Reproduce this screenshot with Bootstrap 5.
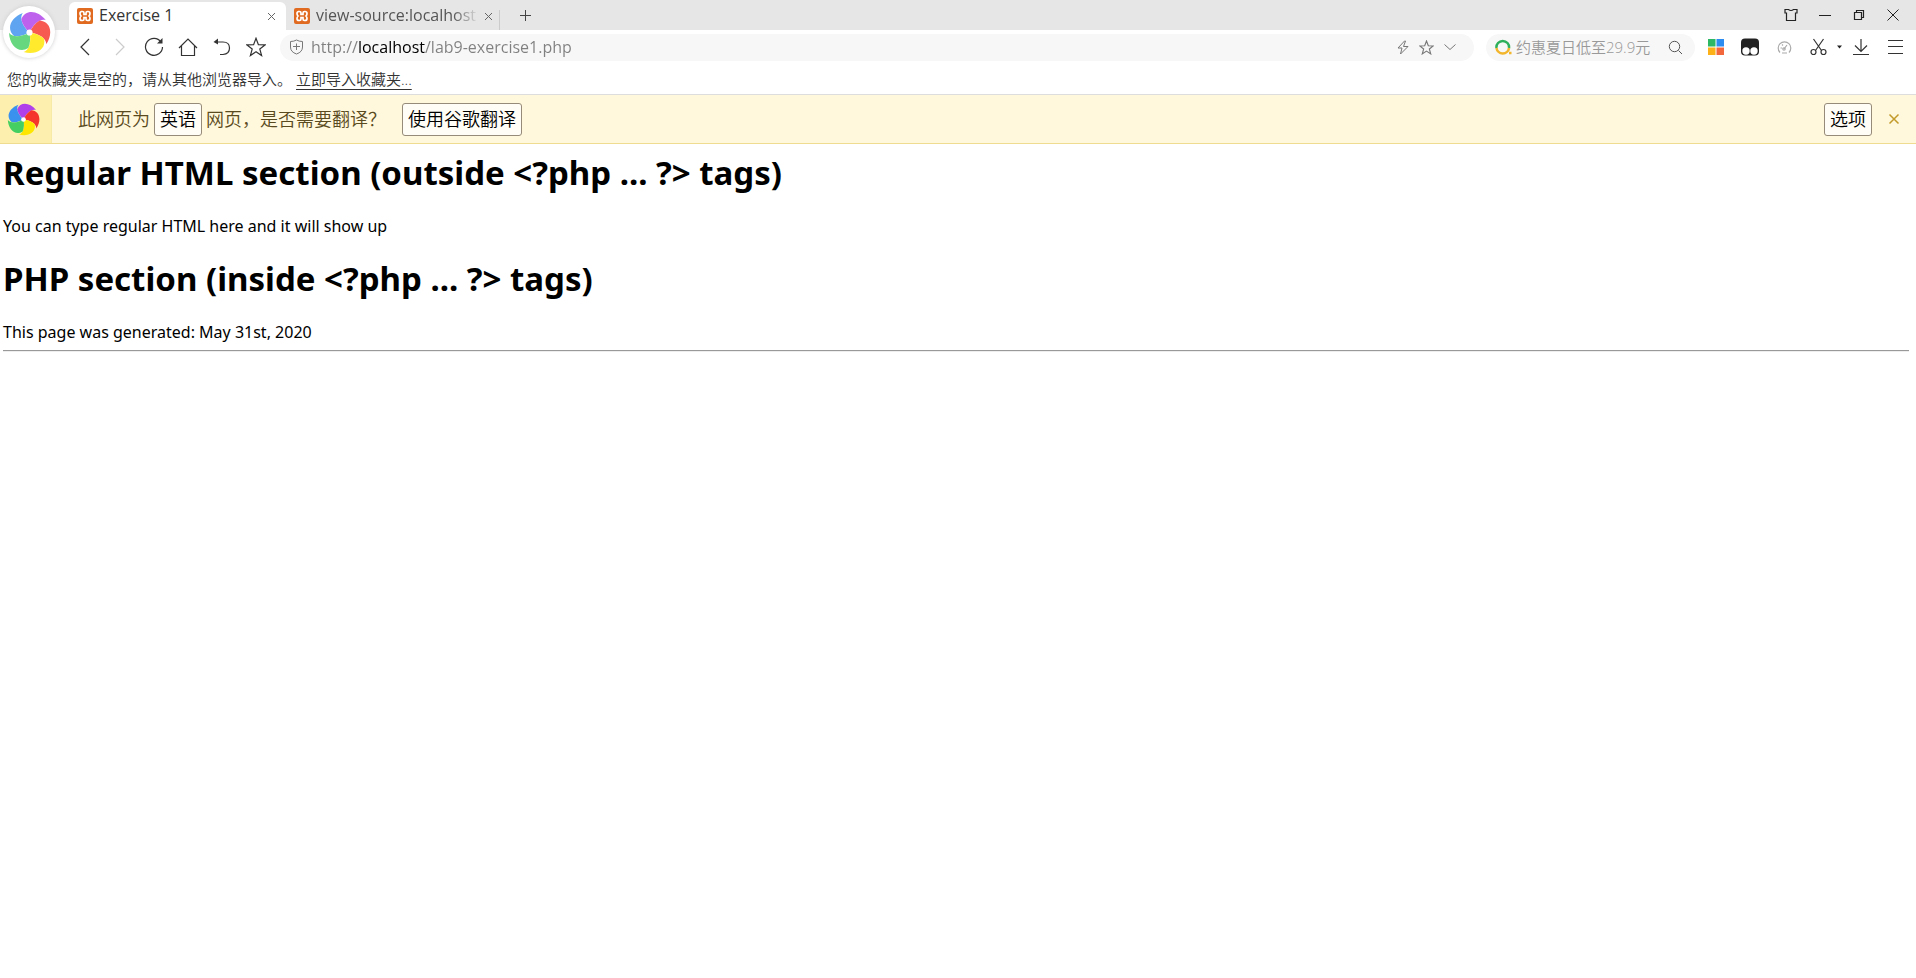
<!DOCTYPE html>
<html lang="zh-CN">
<head>
<meta charset="utf-8">
<meta name="viewport" content="width=device-width, initial-scale=1">
<title>Exercise 1</title>
<link href="https://cdn.jsdelivr.net/npm/bootstrap@5.3.0/dist/css/bootstrap.min.css" rel="stylesheet">
<style>
  body { font-family: "Open Sans", "Noto Sans CJK SC", sans-serif; color: #000; fill: none; stroke: currentColor; }
  button { border: 0; background: transparent; padding: 0; color: inherit; }
  svg { display: block; flex: none; }
  .tab-strip { height: 30px; background: #e6e6e6; padding-left: 69px; padding-right: 6px; }
  .browser-tab { height: 28px; width: 213px; padding: 0 5px 0 8px; font-size: 16px; color: #555; }
  .browser-tab.current { width: 217px; padding-right: 9px; background: #fff; border-radius: 6px 6px 0 0; color: #333; }
  .browser-tab .title { line-height: 26px; margin-left: 6px; padding-bottom: 2px; overflow: hidden; white-space: nowrap; text-align: left; }
  .browser-tab .fade-end { -webkit-mask-image: linear-gradient(90deg, #000 84%, transparent 100%); mask-image: linear-gradient(90deg, #000 84%, transparent 100%); }
  .tab-rule { width: 1px; height: 20px; background: #ccc; }
  .win-btn { width: 34px; height: 30px; color: #222; }
  .brand-disc { left: 3px; top: 6px; width: 52px; height: 52px; background: #fff; box-shadow: 0 0 4px #ccc; }
  .tool-row { height: 34px; padding-left: 69px; padding-right: 4px; }
  .tool { width: 34px; height: 34px; color: #333; }
  .pill { height: 27px; border-radius: 14px; background: #f7f7f7; }
  .pill input { border: 0; outline: 0; background-color: transparent; padding: 0; min-width: 0; }
  .address { margin-left: 7px; margin-right: 12px; padding-left: 9px; padding-right: 17px; color: #777; gap: 9px; }
  .address input { font-size: 16px; margin-left: -2px;
    color: transparent; background-image: linear-gradient(90deg, #808080 47px, #000 47px, #000 114px, #808080 114px);
    -webkit-background-clip: text; background-clip: text; }
  .search { width: 209px; padding: 0 12px 0 9px; margin-right: 4px; }
  .search input { font-size: 15px; font-weight: 350; margin-left: 4px; }
  .search input::placeholder { color: #999; opacity: 1; }
  .fav-row { height: 30px; font-size: 15px; font-weight: 350; line-height: 30px; padding: 0 7px; color: #333; }
  .fav-row a { color: #333; margin-left: 4px; text-underline-offset: 4px; }
  .translate-bar { height: 50px; background: #fff8dc; border-top: 1px solid #ddd; border-bottom: 1px solid #f0dc90; font-size: 18px; font-weight: 350; color: #5a4a20; }
  .translate-mark { width: 52px; margin-right: 26px; background: #fdf0ae; border-right: 1px solid #f7e9a6; padding-left: 7px; }
  .translate-bar .choice { height: 33px; padding: 0 5px; border: 1px solid #968a78; border-radius: 3px; background: #fffdf5; color: #000; line-height: 30px; font-weight: 350; }
  .page { padding: 10px 7px 0 3px; font-family: "Noto Sans", "Open Sans", sans-serif; }
  .page h1 { font-size: 33px; font-weight: 700; line-height: 38px; margin: 0 0 23px; }
  .page p { font-size: 16px; line-height: 22px; margin: 0 0 23px; }
  .page p.stamp { margin-bottom: 7px; }
  .page hr { margin: 0; height: 2px; border: 0; border-top: 1px solid #999; border-bottom: 1px solid #eee; opacity: 1; }
</style>
</head>
<body class="bg-white">

<svg width="0" height="0" class="position-absolute" aria-hidden="true">
  <defs>
    <path id="petal" d="M0 0C-4-4-7-8-8-13C-4-23 8-22 16-12C11-14 4-9 0 0Z"/>
    <symbol id="wheel" viewBox="-21 -21 42 42">
      <g stroke="none">
        <use href="#petal" fill="#3b91ee" transform="rotate(288)"/>
        <use href="#petal" fill="#b040ea"/>
        <use href="#petal" fill="#f5362a" transform="rotate(72)"/>
        <use href="#petal" fill="#ffe600" transform="rotate(144)"/>
        <use href="#petal" fill="#45cf62" transform="rotate(216)"/>
        <circle r="3" fill="#fff"/>
      </g>
    </symbol>
    <symbol id="xampp" viewBox="0 0 16 16">
      <rect width="16" height="16" rx="2" fill="#e06a20" stroke="none"/>
      <path d="M4 3.500H5.500Q7 3.500 7 5V6.500H9V5Q9 3.500 10.500 3.500H11Q13 3.500 13 5.500Q13 7 12 8Q13 9 13 10.500Q13 12.500 11 12.500H10.500Q9 12.500 9 11V9.500H7V11Q7 12.500 5.500 12.500H5Q3 12.500 3 10.500Q3 9 4 8Q3 7 3 5.500Q3 3.500 5 3.500" fill="none" stroke="#fff" stroke-width="1.700"/>
    </symbol>
  </defs>
</svg>

<header class="position-relative">
  <div class="tab-strip d-flex align-items-end">
    <div class="browser-tab current d-flex align-items-center">
      <svg width="16" height="16"><use href="#xampp"/></svg>
      <button class="title flex-grow-1">Exercise 1</button>
      <button aria-label="Close tab"><svg width="11" height="11" viewBox="0 0 11 11" stroke="#666"><path d="M2 2L9 9M9 2L2 9"/></svg></button>
    </div>
    <div class="browser-tab d-flex align-items-center">
      <svg width="16" height="16"><use href="#xampp"/></svg>
      <button class="title fade-end flex-grow-1">view-source:localhost</button>
      <button class="ms-1" aria-label="Close tab"><svg width="11" height="11" viewBox="0 0 11 11" stroke="#666"><path d="M2 2L9 9M9 2L2 9"/></svg></button>
    </div>
    <div class="tab-rule"></div>
    <button class="win-btn d-flex align-items-center justify-content-center ms-2" aria-label="New tab"><svg width="13" height="13" viewBox="0 0 13 13" stroke="#444"><path d="M6.500 1V12M1 6.500H12"/></svg></button>
    <div class="d-flex ms-auto">
      <button class="win-btn d-flex align-items-center justify-content-center" aria-label="Skins"><svg width="14" height="14" viewBox="0 0 14 14" stroke-width="1.200"><path d="M1 1.500H4.500Q7 3.500 9.500 1.500H13V5H11.500V12.500H2.500V5H1Z"/></svg></button>
      <button class="win-btn d-flex align-items-center justify-content-center" aria-label="Minimize"><svg width="12" height="12" viewBox="0 0 12 12"><path d="M0 6.500H12"/></svg></button>
      <button class="win-btn d-flex align-items-center justify-content-center" aria-label="Restore"><svg width="12" height="12" viewBox="0 0 12 12" stroke-width="1.200"><path d="M1.500 3.500H8.500V10.500H1.500ZM3.500 3V1.500H10.500V8.500H9"/></svg></button>
      <button class="win-btn d-flex align-items-center justify-content-center" aria-label="Close"><svg width="12" height="12" viewBox="0 0 12 12"><path d="M.5 .5L11.500 11.500M11.500 .5L.5 11.500"/></svg></button>
    </div>
  </div>

  <button class="brand-disc position-absolute rounded-circle d-flex align-items-center justify-content-center" aria-label="Account"><svg width="43" height="43" opacity=".82"><use href="#wheel"/></svg></button>

  <div class="tool-row d-flex align-items-center">
    <button class="tool d-flex align-items-center justify-content-center" aria-label="Back"><svg width="20" height="20" viewBox="0 0 20 20" stroke-width="1.200"><path d="M13 2L5 10L13 18"/></svg></button>
    <button class="tool d-flex align-items-center justify-content-center" aria-label="Forward"><svg width="20" height="20" viewBox="0 0 20 20" stroke="#ccc" stroke-width="1.200"><path d="M6 2L14 10L6 18"/></svg></button>
    <button class="tool d-flex align-items-center justify-content-center" aria-label="Reload"><svg width="20" height="20" viewBox="0 0 20 20" stroke-width="1.200"><path d="M17 5A8.500 8.500 0 1 0 18.500 10"/><path d="M18.500 1V6.500H13Z" fill="currentColor" stroke="none"/></svg></button>
    <button class="tool d-flex align-items-center justify-content-center" aria-label="Home"><svg width="20" height="20" viewBox="0 0 20 20" stroke-width="1.200"><path d="M1 11L10 2L19 11M3.500 9V18.500H16.500V9"/></svg></button>
    <button class="tool d-flex align-items-center justify-content-center" aria-label="Undo"><svg width="20" height="20" viewBox="0 0 20 20" stroke-width="1.200"><path d="M3 5H11Q17.500 5 17.500 11T11 17.500H8"/><path d="M1.500 5L6 1.500V7.500Z" fill="currentColor" stroke="none"/></svg></button>
    <button class="tool d-flex align-items-center justify-content-center" aria-label="Bookmark"><svg width="20" height="20" viewBox="0 0 20 20" stroke-width="1.200"><path d="M10 1.300L12.400 7.600L19 7.900L13.800 12L15.600 18.500L10 14.800L4.400 18.500L6.200 12L1 7.900L7.600 7.600Z"/></svg></button>

    <div class="pill address d-flex align-items-center flex-grow-1">
      <svg width="15" height="16" viewBox="0 0 15 16"><path d="M7.500 1Q10 2.500 13.500 2.500V8Q13.500 13 7.500 15Q1.500 13 1.500 8V2.500Q5 2.500 7.500 1ZM7.500 4.500V11M4 7.500H11"/></svg>
      <input class="flex-grow-1" type="text" aria-label="Address" value="http://localhost/lab9-exercise1.php">
      <button aria-label="Fast mode"><svg width="14" height="15" viewBox="0 0 14 15"><path d="M8.500 1L2 8H6L4.500 14L12 6.500H7.500L9.500 1Z"/></svg></button>
      <button aria-label="Add favourite"><svg width="15" height="15" viewBox="0 0 20 20" stroke-width="1.500"><path d="M10 1.300L12.400 7.600L19 7.900L13.800 12L15.600 18.500L10 14.800L4.400 18.500L6.200 12L1 7.900L7.600 7.600Z"/></svg></button>
      <button aria-label="History"><svg width="14" height="14" viewBox="0 0 14 14"><path d="M1.500 4.500L7 9.500L12.500 4.500"/></svg></button>
    </div>

    <div class="pill search d-flex align-items-center">
      <svg width="17" height="16" viewBox="0 0 17 16" stroke-width="2.500"><path d="M1.500 9A6.300 6.300 0 1 1 14 9" stroke="#2eaf5b"/><path d="M1.500 9A6.300 6.300 0 0 0 14 9" stroke="#f2b52b"/><path d="M14 14H16.500" stroke="#f2b52b"/></svg>
      <input class="flex-grow-1" type="text" aria-label="Search" placeholder="约惠夏日低至29.9元">
      <button aria-label="Search"><svg width="15" height="15" viewBox="0 0 15 15" stroke="#555"><circle cx="6.500" cy="6.500" r="5.200"/><path d="M10.500 10.500L14 14"/></svg></button>
    </div>

    <button class="tool d-flex align-items-center justify-content-center" aria-label="Apps"><svg width="16" height="16" viewBox="0 0 16 16" stroke="none"><path d="M0 0H7.500V7.500H0Z" fill="#2cb865"/><path d="M8.500 0H16V7.500H8.500Z" fill="#2d8cf0"/><path d="M0 8.500H7.500V16H0Z" fill="#fbb117"/><path d="M8.500 8.500H16V16H8.500Z" fill="#f2673c"/></svg></button>
    <button class="tool d-flex align-items-center justify-content-center" aria-label="Tampermonkey"><svg width="18" height="18" viewBox="0 0 18 18" stroke="none"><rect y="0.500" width="18" height="17" rx="4" fill="#222"/><circle cx="5" cy="13" r="3.700" fill="#fff"/><circle cx="13" cy="13" r="3.700" fill="#fff"/></svg></button>
    <button class="tool d-flex align-items-center justify-content-center" aria-label="Speed"><svg width="15" height="15" viewBox="0 0 15 15" stroke="#aaa" stroke-width="1.200"><path d="M3 12.500A6.300 6.300 0 1 1 12 12.500M7 9L10 5M5 13H10M3.500 8H5M5 4.500L6 5.500"/><circle cx="7" cy="9" r="1.200"/></svg></button>
    <button class="tool d-flex align-items-center justify-content-center" aria-label="Screenshot"><svg width="17" height="18" viewBox="0 0 17 18" stroke-width="1.200"><path d="M3.500 1L11.500 12.500M13.500 1L5.500 12.500"/><circle cx="3.500" cy="14" r="2.500"/><circle cx="13.500" cy="14" r="2.500"/></svg></button>
    <button aria-label="Screenshot options"><svg width="9" height="8" viewBox="0 0 9 8"><path d="M2 2.500H7L4.500 5.500Z" fill="#222" stroke="none"/></svg></button>
    <button class="tool d-flex align-items-center justify-content-center" aria-label="Downloads"><svg width="18" height="18" viewBox="0 0 18 18" stroke-width="1.200"><path d="M9 1V13.500M3 7.500L9 13.500L15 7.500M1 16.500H17"/></svg></button>
    <button class="tool d-flex align-items-center justify-content-center" aria-label="Menu"><svg width="15" height="16" viewBox="0 0 15 16"><path d="M0 1.500H15M0 7.500H15M0 14.500H15"/></svg></button>
  </div>

  <div class="fav-row d-flex"><span>您的收藏夹是空的，请从其他浏览器导入。</span><a href="#">立即导入收藏夹...</a></div>
</header>

<div class="translate-bar d-flex align-items-center">
  <div class="translate-mark align-self-stretch d-flex align-items-center"><svg width="33" height="33"><use href="#wheel"/></svg></div>
  <label for="lang">此网页为</label>
  <button class="choice ms-1" id="lang">英语</button>
  <span class="ms-1">网页，是否需要翻译？</span>
  <button class="choice ms-3">使用谷歌翻译</button>
  <button class="choice ms-auto">选项</button>
  <button class="mx-3" aria-label="Dismiss"><svg width="12" height="12" viewBox="0 0 12 12" stroke="#c29a2a" stroke-width="1.500"><path d="M1.500 1.500L10.500 10.500M10.500 1.500L1.500 10.500"/></svg></button>
</div>

<main class="page">
  <h1>Regular HTML section (outside &lt;?php ... ?&gt; tags)</h1>
  <p>You can type regular HTML here and it will show up</p>
  <h1>PHP section (inside &lt;?php ... ?&gt; tags)</h1>
  <p class="stamp">This page was generated: May 31st, 2020</p>
  <hr>
</main>

<script src="https://cdn.jsdelivr.net/npm/bootstrap@5.3.0/dist/js/bootstrap.bundle.min.js"></script>
</body>
</html>
